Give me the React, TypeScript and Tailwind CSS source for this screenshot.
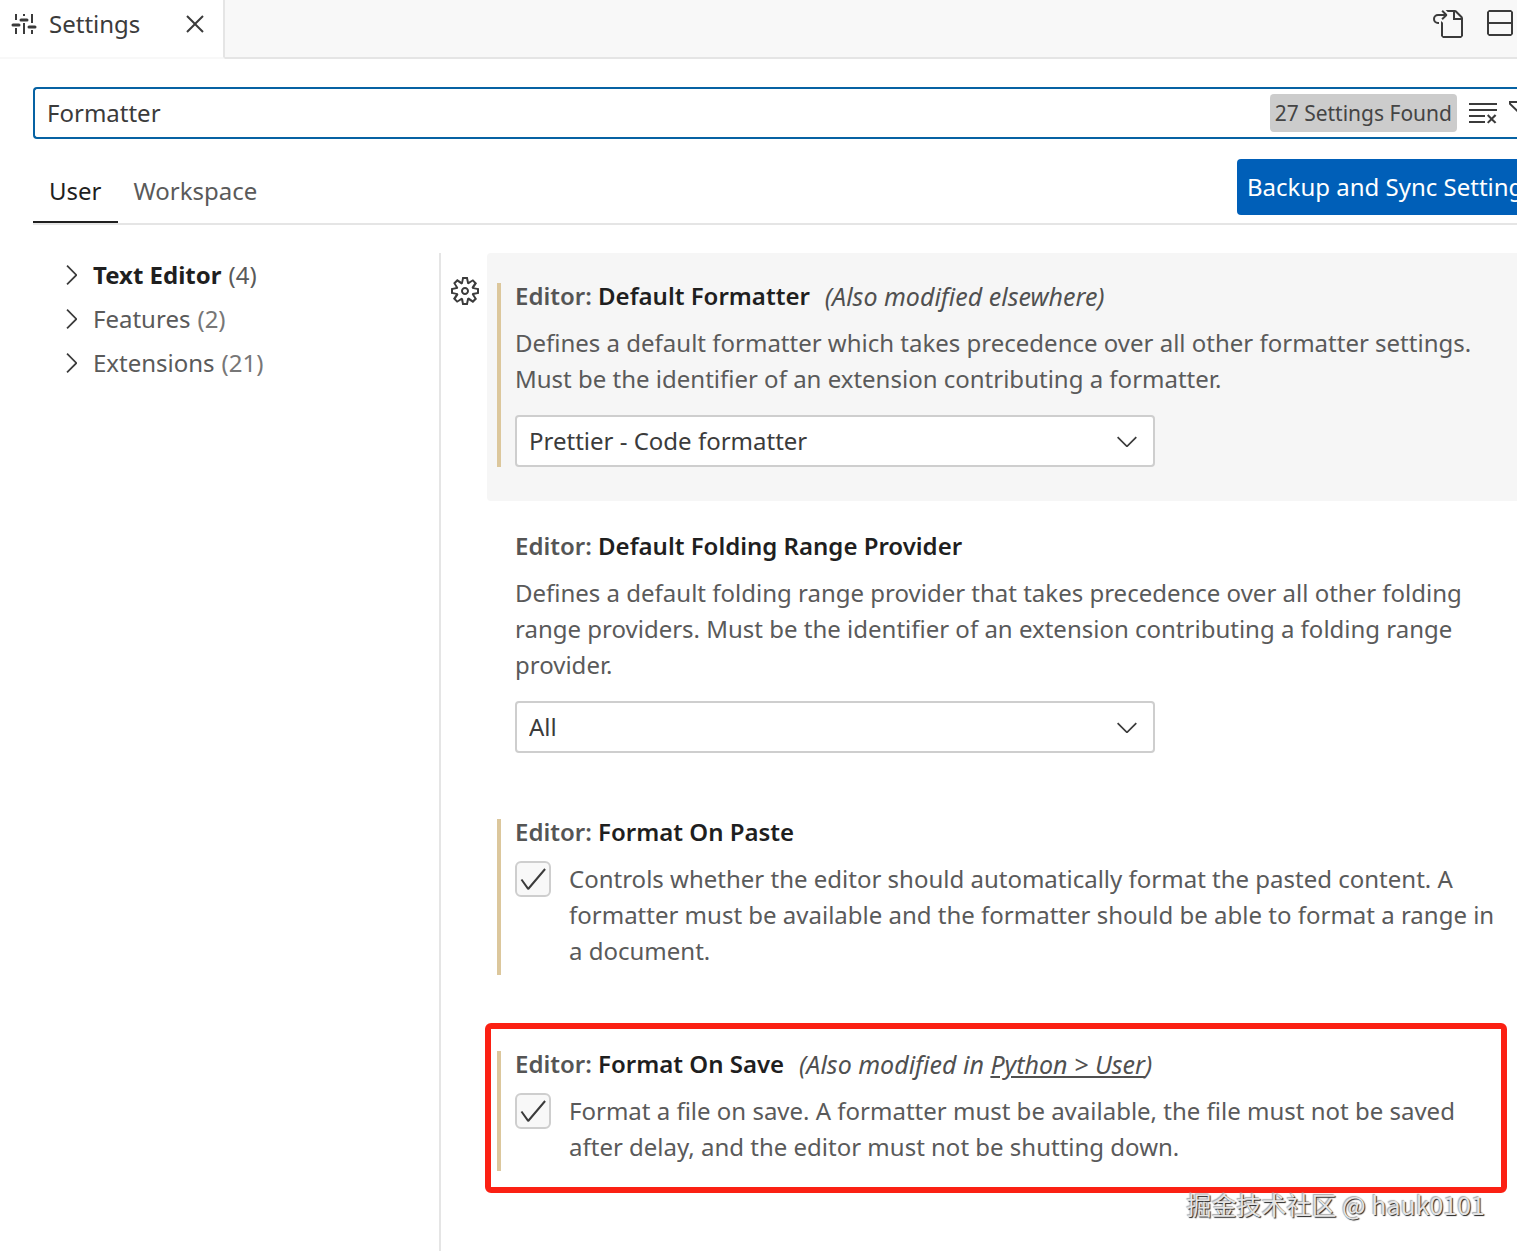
import React from "react";
import {
  VscClose,
  VscGoToFile,
  VscSplitVertical,
  VscClearAll,
  VscFilter,
  VscGear,
  VscChevronRight,
  VscChevronDown,
  VscCheck,
} from "react-icons/vsc";

const groups = [
  { name: "Text Editor", count: 4, active: true },
  { name: "Features", count: 2, active: false },
  { name: "Extensions", count: 21, active: false },
];

function SlidersIcon() {
  return (
    <svg width="32" height="32" viewBox="0 0 32 32" fill="none" stroke="currentColor" strokeWidth="2" aria-hidden="true">
      <path d="M8 6v6M8 20v6M16 6v2M16 15v11M24 6v9M24 22v4" />
      <path d="M5 17h6M13 12h6M21 19h6" strokeWidth="3" strokeLinecap="round" />
    </svg>
  );
}

function Title({ name, children }: { name: string; children?: React.ReactNode }) {
  return (
    <h2 className="flex items-center gap-[15px] whitespace-nowrap leading-[26px]">
      <span className="font-semibold text-[#1f1f1f]">
        <span className="text-[#555555]">Editor: </span>
        {name}
      </span>
      {children && <span className="text-[25px] italic text-[#505050]">{children}</span>}
    </h2>
  );
}

type ItemProps = {
  name: string;
  note?: React.ReactNode;
  modified?: boolean;
  focused?: boolean;
  marked?: boolean;
  children: React.ReactNode;
};

function Item({ name, note, modified, focused, marked, children }: ItemProps) {
  return (
    <li className={`relative flex ${marked ? "mt-[10px]" : ""}`}>
      <div className="w-[46px] shrink-0">
        {focused && (
          <button type="button" aria-label="More actions" className="ml-2 mt-[22px] block text-[#3b3b3b]">
            <VscGear size={32} />
          </button>
        )}
      </div>
      <div className={`min-w-0 flex-1 pb-[34px] pl-[10px] ${focused ? "rounded-l bg-[#f6f6f6] pt-[30px]" : "pt-8"}`}>
        <div className={`border-l-4 pl-[14px] ${modified ? "border-[#dcc79c]" : "border-transparent"}`}>
          <Title name={name}>{note}</Title>
          {children}
        </div>
      </div>
      {marked && (
        <div className="pointer-events-none absolute bottom-3 left-11 right-[10px] top-1 rounded-md border-[6px] border-[#fb2013]" />
      )}
    </li>
  );
}

function Dropdown({ label, value }: { label: string; value: string }) {
  return (
    <div className="relative mt-[18px] w-[640px]">
      <select
        aria-label={label}
        defaultValue={value}
        className="block h-[52px] w-full appearance-none rounded border-2 border-[#cecece] bg-white px-3 text-[#3b3b3b] outline-none"
      >
        <option>{value}</option>
      </select>
      <VscChevronDown size={32} className="pointer-events-none absolute right-3 top-[10px] text-[#3b3b3b]" />
    </div>
  );
}

function Toggle({ id, children }: { id: string; children: React.ReactNode }) {
  return (
    <div className="mt-4 flex gap-[18px] pb-[6px] pr-[10px]">
      <div className="relative h-9 w-9 shrink-0">
        <input
          id={id}
          type="checkbox"
          defaultChecked
          className="peer block h-9 w-9 appearance-none rounded-md border-2 border-[#cecece] bg-[#f8f8f8]"
        />
        <VscCheck size={32} className="pointer-events-none invisible absolute left-[2px] top-[2px] text-[#3b3b3b] peer-checked:visible" />
      </div>
      <label htmlFor={id} className="leading-9">
        {children}
      </label>
    </div>
  );
}

export default function App() {
  return (
    <div className="relative flex min-h-screen flex-col overflow-hidden bg-white font-['Noto_Sans','Noto_Sans_CJK_SC',sans-serif] text-[24px] text-[#5a5a5a]">
      <header className="flex h-[59px] items-stretch bg-[#f8f8f8]">
        <div className="flex w-[225px] items-center border-b-2 border-r-2 border-b-[#f8f8f8] border-r-[#e5e5e5] bg-white pb-[9px] pl-2 text-[#3b3b3b]">
          <SlidersIcon />
          <span className="ml-[9px] flex-1">Settings</span>
          <button type="button" aria-label="Close" className="mr-3">
            <VscClose size={32} />
          </button>
        </div>
        <div className="flex flex-1 items-center justify-end gap-5 border-b-2 border-[#e5e5e5] pb-[9px] pr-[2px] text-[#3b3b3b]">
          <button type="button" aria-label="Open Settings (JSON)">
            <VscGoToFile size={32} />
          </button>
          <button type="button" aria-label="Split Editor">
            <VscSplitVertical size={32} />
          </button>
        </div>
      </header>

      <div className="ml-[33px] mt-7 flex h-[52px] items-center rounded-l border-2 border-r-0 border-[#0662a3]">
        <input
          type="text"
          aria-label="Search settings"
          defaultValue="Formatter"
          className="min-w-0 flex-1 pl-3 text-[#3b3b3b] outline-none"
        />
        <span className="mr-[10px] rounded bg-[#cccccc] px-[5px] text-[21px] leading-[38px] text-[#444444]">27 Settings Found</span>
        <button type="button" aria-label="Clear" className="mr-[8px] text-[#3b3b3b]">
          <VscClearAll size={32} />
        </button>
        <button type="button" aria-label="Filter" className="-mr-[22px] text-[#3b3b3b]">
          <VscFilter size={32} />
        </button>
      </div>

      <div className="ml-[33px] flex h-[86px] items-end justify-between border-b-2 border-[#e5e5e5]">
        <nav className="flex h-[62px]">
          <button type="button" className="border-b-2 border-[#1f1f1f] px-4 text-[#1f1f1f]">
            User
          </button>
          <button type="button" className="border-b-2 border-transparent px-4">
            Workspace
          </button>
        </nav>
        <button
          type="button"
          className="mb-2 h-14 w-[280px] overflow-hidden whitespace-nowrap rounded-l bg-[#005fb8] pl-[10px] text-left text-white"
        >
          Backup and Sync Settings
        </button>
      </div>

      <main className="mt-7 flex flex-1">
        <ul className="w-[439px] shrink-0 pl-[55px]">
          {groups.map((g) => (
            <li key={g.name}>
              <button type="button" className="flex h-11 items-center">
                <VscChevronRight size={32} className="mr-[6px] text-[#3b3b3b]" />
                <span className={g.active ? "font-bold text-[#1f1f1f]" : ""}>{g.name}</span>
                <span className={`ml-[7px] ${g.active ? "text-[#5a5a5a]" : "text-[#777777]"}`}>({g.count})</span>
              </button>
            </li>
          ))}
        </ul>
        <ul className="min-w-0 flex-1 border-l-2 border-[#e5e5e5]">
          <Item name="Default Formatter" note="(Also modified elsewhere)" modified focused>
            <p className="mt-4 pr-[10px] leading-9">
              Defines a default formatter which takes precedence over all other formatter settings. Must be the identifier of
              an extension contributing a formatter.
            </p>
            <Dropdown label="Default Formatter" value="Prettier - Code formatter" />
          </Item>
          <Item name="Default Folding Range Provider">
            <p className="mt-4 pr-[10px] leading-9">
              Defines a default folding range provider that takes precedence over all other folding range providers. Must be
              the identifier of an extension contributing a folding range provider.
            </p>
            <Dropdown label="Default Folding Range Provider" value="All" />
          </Item>
          <Item name="Format On Paste" modified>
            <Toggle id="format-on-paste">
              Controls whether the editor should automatically format the pasted content. A formatter must be available and
              the formatter should be able to format a range in a document.
            </Toggle>
          </Item>
          <Item
            name="Format On Save"
            modified
            marked
            note={
              <>
                (Also modified in{" "}
                <a href="#python-user" className="underline">
                  Python &gt; User
                </a>
                )
              </>
            }
          >
            <Toggle id="format-on-save">
              Format a file on save. A formatter must be available, the file must not be saved after delay, and the editor
              must not be shutting down.
            </Toggle>
          </Item>
        </ul>
      </main>

      <p className="pointer-events-none absolute bottom-[29px] right-8 font-['Noto_Sans_CJK_SC',sans-serif] text-[25px] leading-9 text-[#e4e4e4] [text-shadow:1px_1px_1px_#222222,-1px_-1px_1px_#aaaaaa]">
        掘金技术社区 @ hauk0101
      </p>
    </div>
  );
}
